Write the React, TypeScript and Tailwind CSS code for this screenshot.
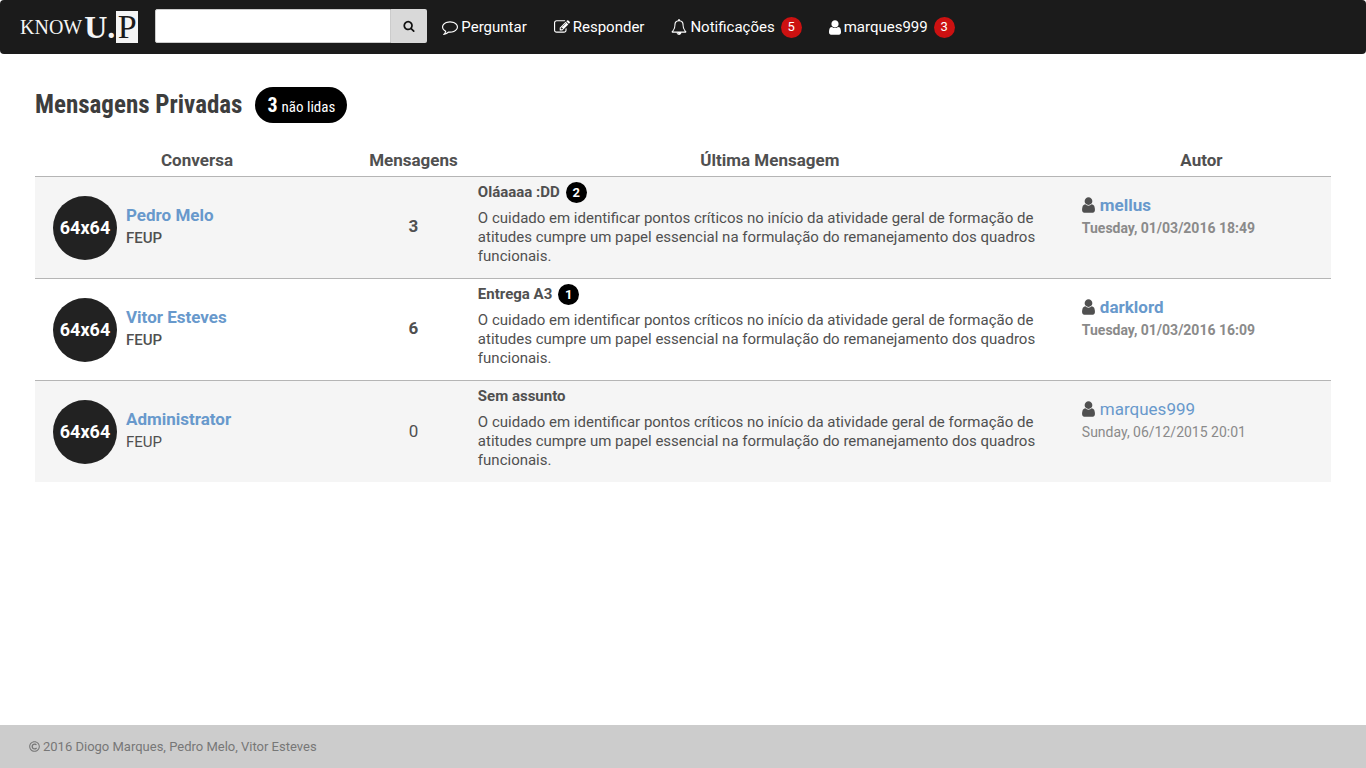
import React from "react";
import { FaRegCopyright } from "react-icons/fa";

const PATHS = {
  user: "M1536 1399q0 109-62.5 187t-150.5 78h-854q-88 0-150.5-78t-62.5-187q0-85 8.5-160.5t31.5-152 58.5-131 94-89 134.5-34.5q131 128 313 128t313-128q76 0 134.5 34.5t94 89 58.5 131 31.5 152 8.5 160.5zm-256-887q0 159-112.5 271.5t-271.5 112.5-271.5-112.5-112.5-271.5 112.5-271.5 271.5-112.5 271.5 112.5 112.5 271.5z",
  search: "M1216 832q0-185-131.5-316.5t-316.5-131.5-316.5 131.5-131.5 316.5 131.5 316.5 316.5 131.5 316.5-131.5 131.5-316.5zm512 832q0 52-38 90t-90 38q-54 0-90-38l-343-342q-179 124-399 124-143 0-273.5-55.5t-225-150-150-225-55.5-273.5 55.5-273.5 150-225 225-150 273.5-55.5 273.5 55.5 225 150 150 225 55.5 273.5q0 220-124 399l343 343q37 37 37 90z",
  comment: "M896 384q-204 0-381.5 69.5t-282 187.5-104.5 255q0 112 71.5 213.5t201.5 175.5l87 50-27 96q-24 91-70 172 152-63 275-171l43-38 57 6q69 8 130 8 204 0 381.5-69.5t282-187.5 104.5-255-104.5-255-282-187.5-381.5-69.5zm896 512q0 174-120 321.5t-326 233-450 85.5q-70 0-145-8-198 175-460 242-49 14-114 22h-5q-15 0-27-10.5t-16-27.5v-1q-3-4-.5-12t2-10 4.5-9.5l6-9 7-8.5 8-9q7-8 31-34.5t34.5-38 31-39.5 32.5-51 27-59 26-76q-157-89-247.5-220t-90.5-281q0-130 71-248.5t191-204.5 286-136.5 348-50.5 348 50.5 286 136.5 191 204.5 71 248.5z",
  edit: "M888 1184l116-116-152-152-116 116v56h96v96h56zm440-720q-16-16-33 1l-350 350q-17 17-1 33t33-1l350-350q17-17 1-33zm80 594v190q0 119-84.5 203.5t-203.5 84.5h-832q-119 0-203.5-84.5t-84.5-203.5v-832q0-119 84.5-203.5t203.5-84.5h832q63 0 117 25 15 7 18 23 3 17-9 29l-49 49q-14 14-32 8-23-6-45-6h-832q-66 0-113 47t-47 113v832q0 66 47 113t113 47h832q66 0 113-47t47-113v-126q0-13 9-22l64-64q15-15 35-7t20 29zm-96-738l288 288-672 672h-288v-288zm444 132l-92 92-288-288 92-92q28-28 68-28t68 28l152 152q28 28 28 68t-28 68z",
  bell: "M912 1696q0-16-16-16-59 0-101.5-42.5t-42.5-101.5q0-16-16-16t-16 16q0 73 51.5 124.5t124.5 51.5q16 0 16-16zm-666-288h1300q-266-300-266-832 0-51-24-105t-69-103-121.5-80.5-169.5-31.5-169.5 31.5-121.5 80.5-69 103-24 105q0 532-266 832zm1482 0q0 52-38 90t-90 38h-448q0 106-75 181t-181 75-181-75-75-181h-448q-52 0-90-38t-38-90q50-42 91-88t85-119.5 74.5-158.5 50-206 19.5-260q0-152 117-282.5t307-158.5q-8-19-8-39 0-40 28-68t68-28 68 28 28 68q0 20-8 39 190 28 307 158.5t117 282.5q0 139 19.5 260t50 206 74.5 158.5 85 119.5 91 88z",
};

function Icon({ name, box = "0 0 1792 1792", className }: { name: keyof typeof PATHS; box?: string; className: string }) {
  return (
    <svg viewBox={box} className={className} fill="currentColor" aria-hidden="true">
      <path d={PATHS[name]} />
    </svg>
  );
}

function NavLink({ label, count, children }: { label: string; count?: number; children: React.ReactNode }) {
  return (
    <a href="#" className="flex h-full items-center pr-3 pl-[15px] text-[15px] text-white">
      {children}
      <span className="ml-[3px]">{label}</span>
      {count !== undefined && (
        <span className="ml-1.5 flex size-[21px] items-center justify-center rounded-full bg-[#cc1111] text-[13px]">
          {count}
        </span>
      )}
    </a>
  );
}

const BODY =
  "O cuidado em identificar pontos críticos no início da atividade geral de formação de atitudes cumpre um papel essencial na formulação do remanejamento dos quadros funcionais.";

const ROWS = [
  { name: "Pedro Melo", total: 3, subject: "Oláaaaa :DD", unread: 2, author: "mellus", date: "Tuesday, 01/03/2016 18:49" },
  { name: "Vitor Esteves", total: 6, subject: "Entrega A3", unread: 1, author: "darklord", date: "Tuesday, 01/03/2016 16:09" },
  { name: "Administrator", total: 0, subject: "Sem assunto", unread: 0, author: "marques999", date: "Sunday, 06/12/2015 20:01" },
];

export default function App() {
  return (
    <div className="flex min-h-screen flex-col bg-white font-['Roboto',sans-serif] text-[#505050]">
      <nav className="flex h-[54px] items-center rounded bg-[#1b1b1b]">
        <a href="#" aria-label="Know U.P" className="ml-5 flex items-center font-['Liberation_Serif',serif] leading-8 text-[#f5f5f5]">
          <span className="text-xl">KNOW</span>
          <span className="ml-0.5 text-[32px] font-bold">U.</span>
          <span className="ml-px flex h-8 w-[22px] items-center justify-center bg-[#f5f5f5] text-[34px] text-[#1b1b1b]">P</span>
        </a>
        <form className="mb-0.5 ml-[17px] flex h-[34px]" onSubmit={(e) => e.preventDefault()}>
          <input
            type="text"
            aria-label="Pesquisar"
            className="w-[236px] rounded-l-xs border border-[#ccc] bg-white px-3 text-sm text-[#505050] outline-none"
          />
          <button
            type="submit"
            aria-label="Pesquisar"
            className="flex w-9 items-center justify-center rounded-r-xs bg-[#d9d9d9] text-[#111]"
          >
            <Icon name="search" className="size-3" />
          </button>
        </form>
        <NavLink label="Perguntar"><Icon name="comment" className="size-4" /></NavLink>
        <NavLink label="Responder"><Icon name="edit" className="size-4" /></NavLink>
        <NavLink label="Notificações" count={5}><Icon name="bell" className="size-4" /></NavLink>
        <NavLink label="marques999" count={3}><Icon name="user" box="256 0 1280 1792" className="h-[17px] w-3" /></NavLink>
      </nav>

      <main className="flex-1 px-[35px] pt-[33px]">
        <div className="flex items-center font-['Roboto_Condensed','Roboto',sans-serif]">
          <h1 className="text-[25px] leading-9 font-bold text-[#3d3d3d]">Mensagens Privadas</h1>
          <span className="ml-[13px] flex h-9 items-baseline gap-1 rounded-full bg-black px-3 leading-9 text-white">
            <strong className="text-xl leading-9 font-bold">3</strong>
            <span className="text-[15px] leading-9">não lidas</span>
          </span>
        </div>

        <table className="mt-[21px] w-full table-fixed border-collapse">
          <thead>
            <tr className="h-8 text-[17px] leading-6">
              <th className="w-[25%] font-bold">Conversa</th>
              <th className="w-[8.4%] font-bold">Mensagens</th>
              <th className="font-bold">Última Mensagem</th>
              <th className="w-[20%] font-bold">Autor</th>
            </tr>
          </thead>
          <tbody>
            {ROWS.map((r) => {
              const weight = r.unread > 0 ? "font-bold" : "font-normal";
              return (
                <tr key={r.name} className="h-[102px] border-t border-[#b5b5b5] odd:bg-[#f5f5f5]">
                  <td className="pt-0.5 pl-[18px]">
                    <div className="flex items-center">
                      <span className="flex size-16 items-center justify-center rounded-full bg-[#222] text-lg font-bold text-white">
                        64x64
                      </span>
                      <div className="ml-[9px] pb-1">
                        <a href="#" className="block text-[17px] leading-6 font-bold text-[#6899cc]">{r.name}</a>
                        <span className={`block text-[15px] leading-[22px] ${r.unread > 0 ? "font-medium" : "font-normal"}`}>FEUP</span>
                      </div>
                    </div>
                  </td>
                  <td className={`text-center text-[17px] ${weight}`}>{r.total}</td>
                  <td className="px-2.5 pt-[5px] align-top">
                    <div className="flex h-[22px] items-center text-[15px] font-bold">
                      {r.subject}
                      {r.unread > 0 && (
                        <span className="ml-1.5 flex size-[21px] items-center justify-center rounded-full bg-black text-[13px] text-white">
                          {r.unread}
                        </span>
                      )}
                    </div>
                    <p className="mt-[5px] pr-6 text-[15px] leading-[19px]">{BODY}</p>
                  </td>
                  <td className="px-2.5 pt-4 align-top">
                    <div className="flex items-center leading-6">
                      <Icon name="user" box="256 0 1280 1792" className="h-[18px] w-[13px]" />
                      <a href="#" className={`ml-[5px] text-[17px] text-[#6899cc] ${weight}`}>{r.author}</a>
                    </div>
                    <div className={`text-sm leading-[22px] text-[#8a8a8a] ${weight}`}>{r.date}</div>
                  </td>
                </tr>
              );
            })}
          </tbody>
        </table>
      </main>

      <footer className="flex h-[43px] items-center gap-[3px] bg-[#ccc] pl-[29px] text-[13px] text-[#777]">
        <FaRegCopyright className="size-[11px]" />
        <span>2016 Diogo Marques, Pedro Melo, Vitor Esteves</span>
      </footer>
    </div>
  );
}
